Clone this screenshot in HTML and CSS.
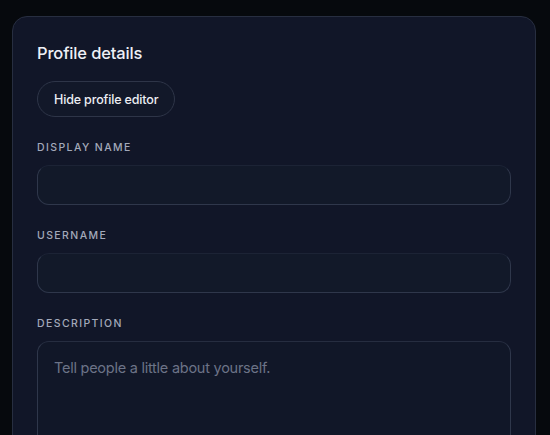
FILE: index.html
```html
<!DOCTYPE html>
<html lang="en">
<head>
<meta charset="utf-8">
<link rel="stylesheet" href="styles.css">
</head>
<body>
<section class="card">
  <h2 class="title">Profile details</h2>
  <button class="toggle" type="button">Hide profile editor</button>
  <div class="field">
    <label class="label">Display name</label>
    <input class="input" type="text">
  </div>
  <div class="field">
    <label class="label">Username</label>
    <input class="input" type="text">
  </div>
  <div class="field">
    <label class="label">Description</label>
    <textarea class="textarea" placeholder="Tell people a little about yourself."></textarea>
  </div>
</section>
</body>
</html>
```
FILE: styles.css
```css
html, body {
  margin: 0;
  padding: 0;
  background: #06090d;
  height: 100%;
  overflow: hidden;
}
body {
  padding: 16px 14px 0 12px;
  font-family: Inter, "Noto Sans", sans-serif;
  color: #e6e8ef;
}
.card {
  background: #111628;
  border: 1px solid #272e40;
  border-radius: 15px;
  padding: 24px 24px 40px;
  display: flex;
  flex-direction: column;
  height: 600px;
}
.title {
  margin: 0;
  font-size: 16.5px;
  font-weight: 500;
  line-height: 24px;
  color: #eef0f6;
  letter-spacing: -0.15px;
}
.toggle {
  align-self: flex-start;
  margin-top: 16px;
  height: 36px;
  padding: 0 16px;
  border-radius: 18px;
  border: 1px solid #2e3548;
  background: #121829;
  color: #eceef4;
  font-family: inherit;
  font-size: 12.5px;
  font-weight: 500;
  letter-spacing: -0.15px;
}
.field {
  display: flex;
  flex-direction: column;
  margin-top: 24px;
}
.label {
  font-size: 10.5px;
  font-weight: 500;
  letter-spacing: 1.4px;
  text-transform: uppercase;
  color: #a3a9ba;
  line-height: 14px;
  margin-bottom: 10px;
}
.input, .textarea {
  box-sizing: border-box;
  width: 100%;
  background: #121929;
  border: 1px solid #2f374b;
  border-top-color: #1c2335;
  border-radius: 12px;
  color: #e6e8ef;
  font-family: inherit;
  outline: none;
  margin: 0;
}
.input {
  height: 40px;
}
.textarea {
  height: 130px;
  resize: none;
  padding: 15px 16px 14px;
  font-size: 14.5px;
  line-height: 22px;
  border-top-color: #262d40;
  background: #111728;
}
.textarea::placeholder {
  color: #6c7387;
  letter-spacing: -0.25px;
}
```
